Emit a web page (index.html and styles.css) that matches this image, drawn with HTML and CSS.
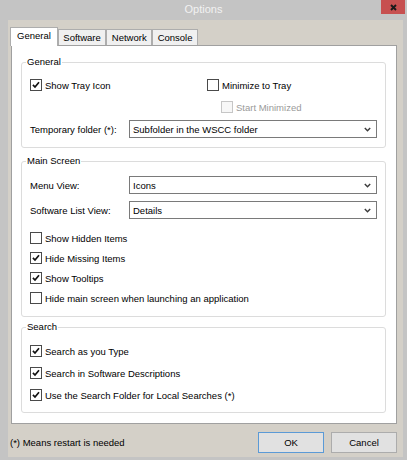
FILE: index.html
```html
<!DOCTYPE html>
<html lang="en">
<head>
<meta charset="utf-8">
<title>Options</title>
<link rel="stylesheet" href="styles.css">
</head>
<body>
<div class="window">
  <div class="titlebar">
    <span class="spacer"></span>
    <span class="title">Options</span>
    <span class="close"><svg width="7" height="7" viewBox="0 0 7 7"><path d="M1 1 L6 6 M6 1 L1 6"/></svg></span>
  </div>
  <div class="client">
    <div class="tabs">
      <div class="tab active">General</div>
      <div class="tab">Software</div>
      <div class="tab">Network</div>
      <div class="tab">Console</div>
    </div>
    <div class="panel">
      <fieldset class="group g1">
        <legend>General</legend>
        <div class="body">
          <div class="pair">
            <label class="check"><span class="box on"><svg viewBox="0 0 12 12"><path d="M2.3 5.8 L4.8 8.4 L9.6 2.6"/></svg></span>Show Tray Icon</label>
            <label class="check"><span class="box"></span>Minimize to Tray</label>
          </div>
          <div class="pair second">
            <span></span>
            <label class="check disabled indent"><span class="box"></span>Start Minimized</label>
          </div>
          <div class="field first-field">
            <span class="label">Temporary folder (*):</span>
            <div class="select"><span>Subfolder in the WSCC folder</span><svg class="chev" viewBox="0 0 7 5"><path d="M0.8 1 L3.5 3.8 L6.2 1"/></svg></div>
          </div>
        </div>
      </fieldset>
      <fieldset class="group g2">
        <legend>Main Screen</legend>
        <div class="body">
          <div class="field">
            <span class="label">Menu View:</span>
            <div class="select"><span>Icons</span><svg class="chev" viewBox="0 0 7 5"><path d="M0.8 1 L3.5 3.8 L6.2 1"/></svg></div>
          </div>
          <div class="field gap">
            <span class="label">Software List View:</span>
            <div class="select"><span>Details</span><svg class="chev" viewBox="0 0 7 5"><path d="M0.8 1 L3.5 3.8 L6.2 1"/></svg></div>
          </div>
          <div class="checks">
            <label class="check row20"><span class="box"></span>Show Hidden Items</label>
            <label class="check row20"><span class="box on"><svg viewBox="0 0 12 12"><path d="M2.3 5.8 L4.8 8.4 L9.6 2.6"/></svg></span>Hide Missing Items</label>
            <label class="check row20"><span class="box on"><svg viewBox="0 0 12 12"><path d="M2.3 5.8 L4.8 8.4 L9.6 2.6"/></svg></span>Show Tooltips</label>
            <label class="check row20"><span class="box"></span>Hide main screen when launching an application</label>
          </div>
        </div>
      </fieldset>
      <fieldset class="group g3">
        <legend>Search</legend>
        <div class="body">
          <label class="check row22"><span class="box on"><svg viewBox="0 0 12 12"><path d="M2.3 5.8 L4.8 8.4 L9.6 2.6"/></svg></span>Search as you Type</label>
          <label class="check row22"><span class="box on"><svg viewBox="0 0 12 12"><path d="M2.3 5.8 L4.8 8.4 L9.6 2.6"/></svg></span>Search in Software Descriptions</label>
          <label class="check row22"><span class="box on"><svg viewBox="0 0 12 12"><path d="M2.3 5.8 L4.8 8.4 L9.6 2.6"/></svg></span>Use the Search Folder for Local Searches (*)</label>
        </div>
      </fieldset>
    </div>
    <div class="footer">
      <span class="note">(*) Means restart is needed</span>
      <button class="btn default">OK</button>
      <button class="btn">Cancel</button>
    </div>
  </div>
</div>
</body>
</html>
```
FILE: styles.css
```css
* { box-sizing: border-box; }
html, body { margin: 0; padding: 0; }
body {
  width: 407px;
  height: 460px;
  overflow: hidden;
  background: #c4c4c4;
  font-family: "Liberation Sans", Arial, sans-serif;
  font-size: 9.5px;
  color: #000;
}
.window {
  display: flex;
  flex-direction: column;
  height: 460px;
}
.titlebar {
  height: 20px;
  display: grid;
  grid-template-columns: 1fr auto 1fr;
  align-items: start;
}
.title {
  color: #f2f2f2;
  font-size: 11px;
  line-height: 18px;
}
.close {
  justify-self: end;
  width: 24px;
  height: 14px;
  margin-right: 2px;
  background: #c75050;
  display: flex;
  align-items: center;
  justify-content: center;
}
.close svg path { stroke: #1a1a1a; stroke-width: 1.9; fill: none; }
.client {
  flex: 1;
  margin: 0 4px 3px 8px;
  background: #d4d0c8;
  padding: 7px 7px 0 3px;
}
.tabs {
  display: flex;
  align-items: flex-end;
  height: 18px;
}
.tab {
  height: 16px;
  border: 1px solid #adadad;
  border-bottom: none;
  background: #f0f0f0;
  padding: 0 4.5px;
  line-height: 15px;
  white-space: nowrap;
}
.tab.active {
  height: 19px;
  margin-left: -1px;
  margin-bottom: -1px;
  padding: 0 6px;
  background: #fff;
  line-height: 16px;
  position: relative;
  z-index: 1;
}
.panel {
  width: 386px;
  height: 379px;
  border: 1px solid #a0a0a0;
  background: #fff;
  padding: 10px 10px 0 9px;
}
.group {
  margin: 0;
  padding: 0;
  border: 1px solid #dcdcdc;
  border-radius: 3px;
  min-width: 0;
}
.group legend {
  padding: 0 1px;
  margin-left: 4px;
  line-height: 12px;
  font-size: 9.5px;
}
.g2 { margin-top: 7px; }
.g3 { margin-top: 4px; }
.g1 .body { padding: 7px 8px 9px 8px; }
.g2 .body { padding: 9px 8px 8px 8px; }
.g3 .body { padding: 7px 8px 6px 8px; }
.body { display: flex; flex-direction: column; }
.pair {
  display: grid;
  grid-template-columns: 177px 1fr;
  height: 20px;
}
.pair.second { margin-top: 2px; }
.field {
  display: grid;
  grid-template-columns: 99px 1fr;
  align-items: center;
  height: 18px;
}
.first-field { margin-top: 3px; }
.field.gap { margin-top: 7px; }
.label { white-space: nowrap; }
.select {
  height: 18px;
  border: 1px solid #7a7a7a;
  background: #fff;
  display: flex;
  align-items: center;
  justify-content: space-between;
  padding: 0 5px 0 3px;
}
.chev { width: 7px; height: 5px; }
.chev path { stroke: #3c3c3c; stroke-width: 1.4; fill: none; }
.checks { margin-top: 9px; display: flex; flex-direction: column; }
.check {
  display: flex;
  align-items: center;
  gap: 3px;
  white-space: nowrap;
  height: 20px;
}
.row20 { height: 20px; }
.row22 { height: 22px; }
.indent { margin-left: 14px; }
.box {
  width: 12px;
  height: 12px;
  border: 1px solid #4a4a4a;
  background: #fff;
  display: flex;
  flex: none;
}
.box svg { width: 10px; height: 10px; }
.box svg path { stroke: #111; stroke-width: 2; fill: none; }
.check.disabled { color: #9a9a9a; }
.check.disabled .box { border-color: #c6c6c6; background: #f7f7f7; }
.footer {
  display: flex;
  align-items: center;
  width: 386px;
  margin-top: 8px;
  height: 21px;
}
.note { margin-left: -1px; }
.btn {
  width: 66px;
  height: 21px;
  font-family: "Liberation Sans", Arial, sans-serif;
  font-size: 9.5px;
  color: #000;
  background: #e1e1e1;
  border: 1px solid #acacac;
  padding: 0;
  margin-left: 7px;
}
.btn.default {
  margin-left: auto;
  border-color: #5b9ad6;
}
```
